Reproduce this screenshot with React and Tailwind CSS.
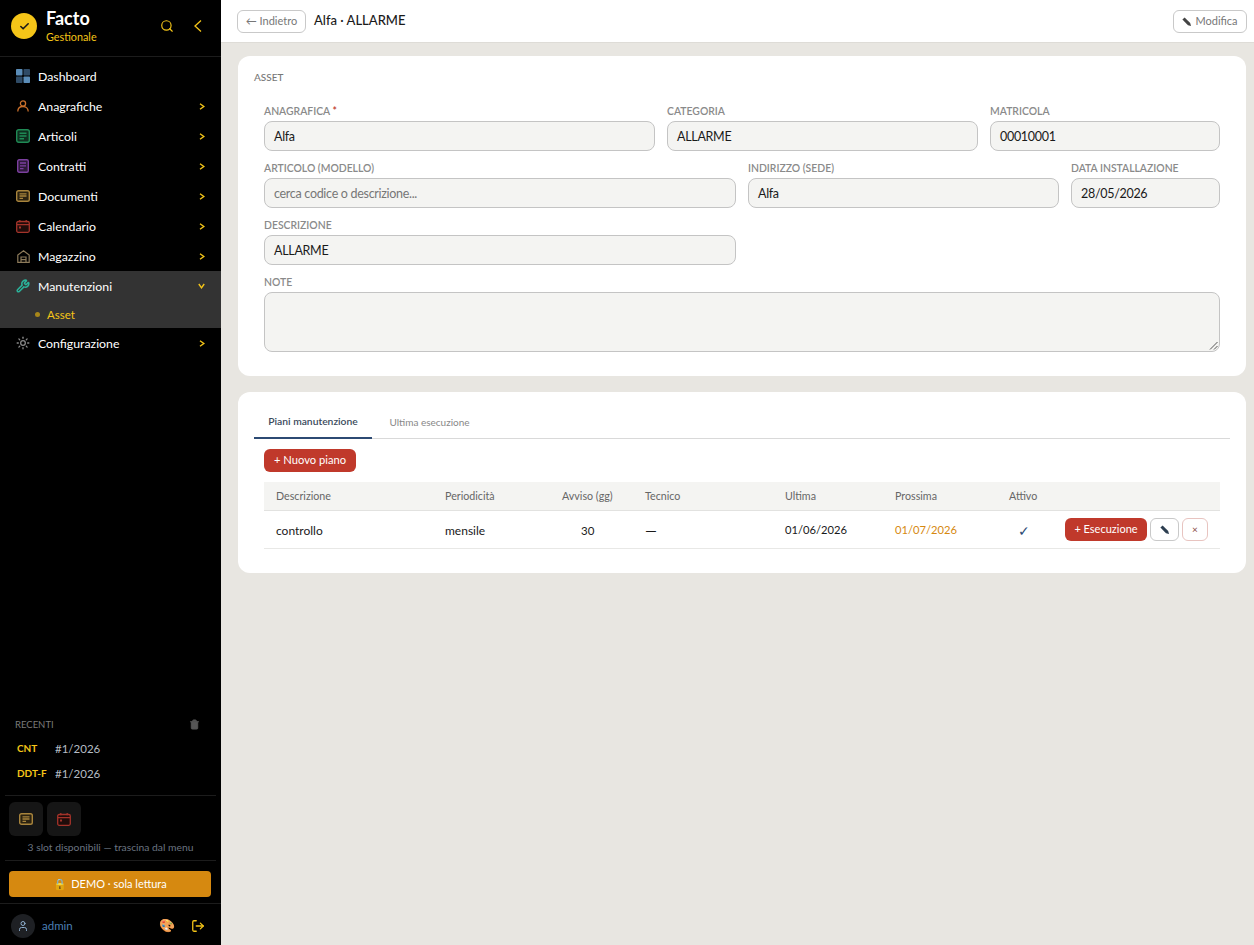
import React from 'react';
import { Check, Search, User, Wrench, Sun, Trash2, LogOut } from 'lucide-react';

const font = { fontFamily: 'Lato, sans-serif' };

const DashIcon = () => (
  <svg width="14" height="14" viewBox="0 0 14 14">
    <rect x="0" y="0" width="6.500" height="6.500" rx="0.800" fill="#5b8db8" />
    <rect x="7.500" y="0" width="6.500" height="6.500" rx="0.800" fill="#2f4b66" />
    <rect x="0" y="7.500" width="6.500" height="6.500" rx="0.800" fill="#2f4b66" />
    <rect x="7.500" y="7.500" width="6.500" height="6.500" rx="0.800" fill="#5b8db8" />
  </svg>
);

const PersonIcon = () => (
  <svg width="12" height="12" viewBox="0 0 12 12" fill="none" stroke="#c96f2b" strokeWidth="1.300">
    <circle cx="6" cy="3.500" r="2.600" />
    <path d="M0.800 11.500c0-3 2-5 5.200-5s5.200 2 5.200 5" />
  </svg>
);

const ArticoliIcon = () => (
  <svg width="14" height="14" viewBox="0 0 14 14" fill="#0f2f1f" stroke="#1f8a55" strokeWidth="1.400">
    <rect x="0.700" y="0.700" width="12.600" height="12.600" rx="2" />
    <path d="M3.500 4.200h7M3.500 7h7M3.500 9.800h4.500" strokeWidth="1.500" />
  </svg>
);

const ContractIcon = () => (
  <svg width="12" height="14" viewBox="0 0 12 14" fill="#2c1a38" stroke="#7b3f9e" strokeWidth="1.400">
    <rect x="0.700" y="0.700" width="10.600" height="12.600" rx="1.500" />
    <path d="M3 4h6M3 6.800h6M3 9.600h3.500" strokeWidth="1.300" />
  </svg>
);

const DocIcon = () => (
  <svg width="14" height="12" viewBox="0 0 14 12" fill="#2b2210" stroke="#a8843c" strokeWidth="1.400">
    <rect x="0.700" y="0.700" width="12.600" height="10.600" rx="1.800" />
    <path d="M3.500 3.800h7M3.500 6h7M3.500 8.300h3.500" strokeWidth="1.300" />
  </svg>
);

const CalIcon = () => (
  <svg width="14" height="13" viewBox="0 0 14 13" fill="#1f0c0a" stroke="#a3332a" strokeWidth="1.300">
    <rect x="0.700" y="1.500" width="12.600" height="10.800" rx="1.500" />
    <path d="M0.700 4.600h12.600M3.800 0v2.300M10.200 0v2.300" />
    <rect x="3" y="6.500" width="2" height="2" fill="#a3332a" stroke="none" />
  </svg>
);

const HouseIcon = () => (
  <svg width="13" height="13" viewBox="0 0 13 13" fill="none" stroke="#8c7a5a" strokeWidth="1.200">
    <path d="M0.800 12.400V5L6.500 0.800 12.200 5v7.400z" />
    <path d="M4 12.400V7h5v5.400M4 9.700h5" />
  </svg>
);

const PencilGlyph = ({ className }) => (
  <svg className={className} width="9" height="9" viewBox="0 0 9 9" fill="currentColor">
    <path d="M2.600 0.400 8.200 6 9 9 6 8.200 0.400 2.600z" />
  </svg>
);

const ArrowRight = () => (
  <svg className="ml-auto" width="6" height="7" viewBox="0 0 6 7" fill="none" stroke="#f5c518" strokeWidth="1.400">
    <path d="M1 0.800 4.800 3.500 1 6.200" />
  </svg>
);

const ArrowDown = () => (
  <svg className="ml-auto" width="7" height="6" viewBox="0 0 7 6" fill="none" stroke="#f5c518" strokeWidth="1.400">
    <path d="M0.800 1 3.500 4.800 6.200 1" />
  </svg>
);

const menu = [
  { label: 'Dashboard', icon: <DashIcon /> },
  { label: 'Anagrafiche', icon: <PersonIcon />, arrow: true },
  { label: 'Articoli', icon: <ArticoliIcon />, arrow: true },
  { label: 'Contratti', icon: <ContractIcon />, arrow: true },
  { label: 'Documenti', icon: <DocIcon />, arrow: true },
  { label: 'Calendario', icon: <CalIcon />, arrow: true },
  { label: 'Magazzino', icon: <HouseIcon />, arrow: true },
];

const navText = 'pt-[2px] text-[12.300px] text-white';

const MenuRow = ({ item }) => (
  <div className="flex h-[30px] items-center pl-[16px] pr-[16px]">
    <span className="mr-[8px] flex w-[14px] justify-center">{item.icon}</span>
    <span className={navText}>{item.label}</span>
    {item.arrow && <ArrowRight />}
  </div>
);

const Sidebar = () => (
  <aside className="flex h-[945px] w-[221px] shrink-0 flex-col bg-black">
    <div className="flex h-[57px] items-center border-b border-[#1c1c1c] pb-[4px] pl-[11px] pr-[19px]">
      <div className="flex h-[26px] w-[26px] items-center justify-center rounded-full bg-[#f5c518]">
        <Check size={11} strokeWidth={3.500} className="text-[#1a1a1a]" />
      </div>
      <div className="ml-[9px] flex flex-col">
        <span className="text-[18px] font-bold leading-[20px] text-white">Facto</span>
        <span className="pt-[1px] text-[10.800px] leading-[15px] text-[#f5c518]">Gestionale</span>
      </div>
      <Search size={14} className="ml-auto text-[#f5c518]" />
      <svg className="ml-[20px]" width="8" height="12" viewBox="0 0 8 12" fill="none" stroke="#f5c518" strokeWidth="1.300">
        <path d="M7 0.600 1 6l6 5.400" />
      </svg>
    </div>
    <nav className="pt-[4px]">
      {menu.map((item) => <MenuRow key={item.label} item={item} />)}
      <div className="bg-[#333333]">
        <div className="flex h-[30px] items-center pl-[16px] pr-[16px]">
          <span className="mr-[8px] flex w-[14px] justify-center"><Wrench size={14} strokeWidth={2.600} className="text-[#2bb39a]" /></span>
          <span className={navText}>Manutenzioni</span>
          <ArrowDown />
        </div>
        <div className="flex h-[27px] items-center pl-[35px]">
          <span className="h-[5px] w-[5px] rounded-full bg-[#a8871a]" />
          <span className="ml-[7px] text-[11.500px] text-[#f5c518]">Asset</span>
        </div>
      </div>
      <div className="flex h-[30px] items-center pl-[16px] pr-[16px]">
        <span className="mr-[8px] flex w-[14px] justify-center"><Sun size={14} strokeWidth={2.200} className="text-[#8a8a8a]" /></span>
        <span className={navText}>Configurazione</span>
        <ArrowRight />
      </div>
    </nav>
    <div className="mt-auto">
      <div className="flex h-[20px] items-center justify-between pl-[15px] pr-[21px]">
        <span className="pt-[2px] text-[9.500px] text-[#7a7a7a]">RECENTI</span>
        <Trash2 size={11} className="text-[#555555]" fill="#555555" />
      </div>
      <div className="mt-[2px] flex h-[25px] items-center pl-[17px]">
        <span className="w-[38px] text-[10px] font-bold text-[#f5c518]">CNT</span>
        <span className="text-[11.500px] text-[#b5bcc4]">#1/2026</span>
      </div>
      <div className="flex h-[25px] items-center pl-[17px]">
        <span className="w-[38px] text-[10px] font-bold text-[#f5c518]">DDT-F</span>
        <span className="text-[11.500px] text-[#b5bcc4]">#1/2026</span>
      </div>
      <div className="mx-[5px] mt-[9px] border-t border-[#1c1c1c]" />
      <div className="flex gap-[4px] pl-[9px] pt-[6px]">
        <div className="flex h-[34px] w-[34px] items-center justify-center rounded-[6px] bg-[#161616]"><DocIcon /></div>
        <div className="flex h-[34px] w-[34px] items-center justify-center rounded-[6px] bg-[#161616]"><CalIcon /></div>
      </div>
      <div className="mt-[3px] text-center text-[10.300px] leading-[16px] text-[#6b7480]">3 slot disponibili — trascina dal menu</div>
      <div className="mx-[5px] mt-[5px] border-t border-[#1c1c1c]" />
      <div className="pb-[6px] pl-[9px] pr-[10px] pt-[10px]">
        <div className="flex h-[26px] items-center justify-center rounded-[4px] bg-[#d68910] text-[11px] text-white">
          <span className="mr-[4px] text-[11px]">🔒</span>DEMO · sola lettura
        </div>
      </div>
      <div className="flex h-[42px] items-center border-t border-[#1c1c1c] pl-[11px] pr-[16px] pt-[2px]">
        <div className="flex h-[24px] w-[24px] items-center justify-center rounded-full bg-[#1e2024]">
          <User size={12} className="text-[#8fb0d0]" />
        </div>
        <span className="ml-[7px] text-[11.500px] text-[#4a7fb5]">admin</span>
        <span className="ml-auto text-[13px]">🎨</span>
        <LogOut size={14} strokeWidth={2.200} className="ml-[16px] text-[#f5c518]" />
      </div>
    </div>
  </aside>
);

const labelClass = 'mb-[3px] text-[10.400px] font-semibold leading-[14px] text-[#8a8a8a]';

const Field = ({ label, value, placeholder, required }) => (
  <div className="min-w-0">
    <div className={labelClass}>
      {label}{required && <span className="text-[#c0392b]"> *</span>}
    </div>
    <div className={`flex h-[30px] items-center rounded-[8px] border border-[#c4c4c4] bg-[#f4f4f2] px-[9px] pt-[2px] text-[12.500px] tracking-[-0.3px] ${placeholder ? 'text-[#777777]' : 'text-[#1a1a1a]'}`}>
      {value || placeholder}
    </div>
  </div>
);

const AssetCard = () => (
  <section className="rounded-[12px] bg-white px-[16px] pb-[24px] pt-[14px]">
    <div className="text-[10px] font-medium leading-[14px] text-[#777777]">ASSET</div>
    <div className="mt-[20px] px-[10px]">
      <div className="grid grid-cols-[391fr_311fr_230fr] gap-x-[12px]">
        <Field label="ANAGRAFICA" value="Alfa" required />
        <Field label="CATEGORIA" value="ALLARME" />
        <Field label="MATRICOLA" value="00010001" />
      </div>
      <div className="mt-[10px] grid grid-cols-[472fr_311fr_149fr] gap-x-[12px]">
        <Field label="ARTICOLO (MODELLO)" placeholder="cerca codice o descrizione..." />
        <Field label="INDIRIZZO (SEDE)" value="Alfa" />
        <Field label="DATA INSTALLAZIONE" value="28/05/2026" />
      </div>
      <div className="mt-[10px] grid grid-cols-[472fr_311fr_149fr] gap-x-[12px]">
        <Field label="DESCRIZIONE" value="ALLARME" />
      </div>
      <div className="mt-[10px]">
        <div className={labelClass}>NOTE</div>
        <div className="relative h-[60px] rounded-[8px] border border-[#c4c4c4] bg-[#f4f4f2]">
          <svg className="absolute bottom-[1px] right-[1px]" width="9" height="9" viewBox="0 0 9 9" stroke="#555555" strokeWidth="1">
            <path d="M8.500 1 1 8.500M8.500 5 5 8.500" />
          </svg>
        </div>
      </div>
    </div>
  </section>
);

const cols = 'grid grid-cols-[169px_117px_83px_140px_110px_114px_56px_1fr] items-center';

const PlansCard = () => (
  <section className="mt-[16px] rounded-[12px] bg-white px-[16px] pb-[24px] pt-[16px]">
    <div className="flex h-[31px] border-b border-[#d9d9d9]">
      <div className="-mb-px flex w-[118px] items-start justify-center border-b-2 border-[#2c4a73] pt-[6px] text-[10.300px] font-semibold leading-[14px] text-[#3a4a5c]">Piani manutenzione</div>
      <div className="flex w-[114px] items-start justify-center pl-[1px] pt-[7px] text-[10px] leading-[14px] text-[#888888]">Ultima esecuzione</div>
    </div>
    <div className="mx-[10px]">
      <button className="mt-[10px] flex h-[23px] w-[92px] items-center justify-center rounded-[6px] bg-[#c0392b] text-[11.200px] text-white">+ Nuovo piano</button>
      <div className={`${cols} mt-[10px] h-[29px] border-b border-[#e2e2e0] bg-[#f4f4f2] pl-[12px] text-[10.700px] text-[#666666]`}>
        <span>Descrizione</span>
        <span>Periodicità</span>
        <span>Avviso (gg)</span>
        <span>Tecnico</span>
        <span>Ultima</span>
        <span>Prossima</span>
        <span>Attivo</span>
        <span />
      </div>
      <div className={`${cols} h-[38px] border-b border-[#e8e8e6] pl-[12px] text-[12px] text-[#1a1a1a] [&>span]:pt-[2px]`}>
        <span>controllo</span>
        <span>mensile</span>
        <span className="pl-[19px] text-[11.500px]">30</span>
        <span className="text-[15px]">—</span>
        <span className="text-[11.200px]">01/06/2026</span>
        <span className="text-[11.200px] text-[#d68910]">01/07/2026</span>
        <span className="pl-[9px] text-[14px] text-[#2c4a73]">✓</span>
        <div className="flex items-center">
          <button className="flex h-[23px] w-[82px] items-center justify-center rounded-[6px] bg-[#c0392b] text-[11px] text-white">+ Esecuzione</button>
          <button className="ml-[3px] flex h-[23px] w-[29px] items-center justify-center rounded-[6px] border border-[#c9c9c9] bg-white text-[#2c3e50]"><PencilGlyph /></button>
          <button className="ml-[3px] flex h-[23px] w-[26px] items-center justify-center rounded-[6px] border border-[#e8c4c0] bg-white text-[10px] text-[#8a4a44]">×</button>
        </div>
      </div>
    </div>
  </section>
);

export default function App() {
  return (
    <div className="flex h-[945px] w-[1254px] overflow-hidden bg-[#e8e6e1]" style={font}>
      <Sidebar />
      <main className="min-w-0 flex-1">
        <header className="flex h-[43px] items-center border-b border-[#dedcd7] bg-white pl-[16px] pr-[7px]">
          <button className="flex h-[23px] w-[69px] items-center justify-center rounded-[6px] border border-[#c9c9c9] text-[11px] text-[#777777]">← Indietro</button>
          <span className="ml-[8px] text-[13px] font-medium text-[#1a1a1a]">Alfa · ALLARME</span>
          <button className="ml-auto flex h-[23px] w-[74px] items-center justify-center gap-[4px] rounded-[6px] border border-[#c9c9c9] text-[11px] text-[#777777]"><PencilGlyph className="text-[#444444]" />Modifica</button>
        </header>
        <div className="pl-[17px] pr-[8px] pt-[13px]">
          <AssetCard />
          <PlansCard />
        </div>
      </main>
    </div>
  );
}
